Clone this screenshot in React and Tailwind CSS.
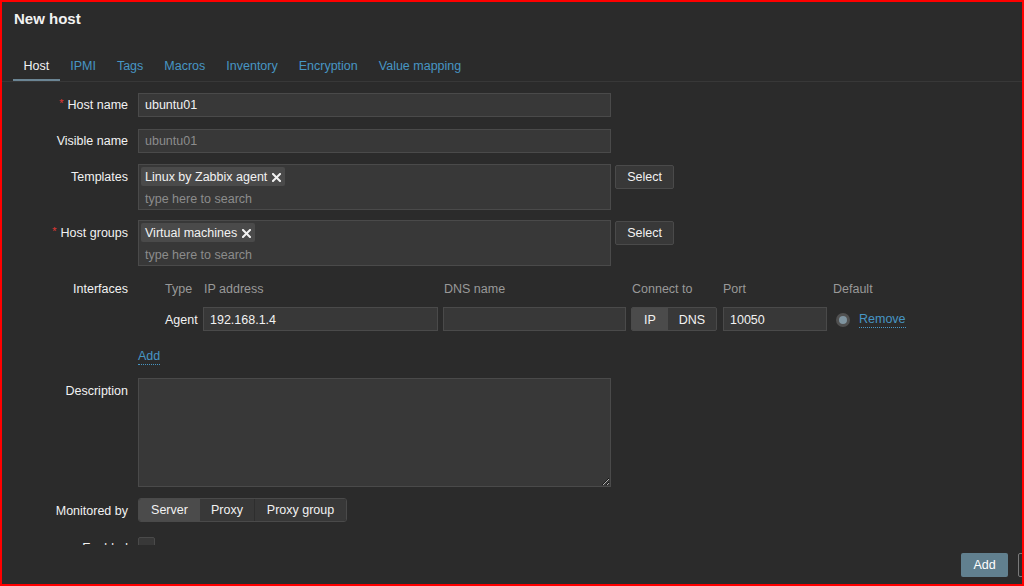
import React from "react";

const inputCls =
  "h-[24px] bg-[#383838] border border-[#4a4a4a] px-[6px] text-[#f2f2f2] outline-none leading-4";

function Req() {
  return <span className="text-[#e33734] text-[11px] mr-[4px] relative -top-[2px]">*</span>;
}

function Row({ label, required, tight, className = "", children }) {
  return (
    <div className={"flex gap-[10px] " + className}>
      <div className={"w-[126px] shrink-0 text-right leading-4 " + (tight ? "pt-[4px]" : "pt-[5px]")}>
        {required && <Req />}
        {label}
      </div>
      <div className="flex-1 min-w-0">{children}</div>
    </div>
  );
}

function XIcon() {
  return (
    <svg width="9" height="9" viewBox="0 0 9 9" className="ml-[5px]">
      <path d="M1 1 L8 8 M8 1 L1 8" stroke="#f2f2f2" strokeWidth="2" strokeLinecap="square" />
    </svg>
  );
}

function MultiSelect({ chip }) {
  return (
    <div className="flex">
      <div className="w-[473px] h-[46px] bg-[#383838] border border-[#4a4a4a] pt-[2px] pl-[2px]">
        <div className="inline-flex items-center h-[19px] px-[4px] pt-[1px] bg-[#4a4a4a] rounded-[2px] leading-[18px]">
          {chip}
          <XIcon />
        </div>
        <div className="mt-[4px] pl-[4px] leading-4 text-[#8c8c8c]">type here to search</div>
      </div>
      <button className="ml-[4px] mt-[1px] h-[24px] w-[59px] bg-[#383838] border border-[#4a4a4a] rounded-[2px] text-[#f2f2f2]">
        Select
      </button>
    </div>
  );
}

const tabs = ["Host", "IPMI", "Tags", "Macros", "Inventory", "Encryption", "Value mapping"];

export default function App() {
  return (
    <div className="w-[1024px] h-[586px] border-2 border-[#ff0000] bg-[#2b2b2b] flex flex-col overflow-hidden font-['Liberation_Sans',Arial,sans-serif] text-[12.5px] text-[#f2f2f2]">
      {/* header */}
      <div className="pl-[12px] pt-[9px] text-[15px] font-bold leading-4">New host</div>
      <div className="mt-[31px] flex pl-[11px] border-b border-[#383838]">
        {tabs.map((t, i) => (
          <div
            key={t}
            className={
              "px-[10.5px] pb-[5px] leading-4 border-b-2 " +
              (i === 0 ? "border-[#6b8594] text-[#f2f2f2]" : "border-transparent text-[#4796c4]")
            }
          >
            {t}
          </div>
        ))}
      </div>

      {/* form */}
      <div className="flex-1 overflow-hidden pt-[11px]">
        <Row label="Host name" required tight>
          <input className={inputCls + " w-[473px]"} defaultValue="ubuntu01" readOnly />
        </Row>
        <Row label="Visible name" tight className="mt-[12px]">
          <input className={inputCls + " w-[473px] placeholder-[#8c8c8c]"} placeholder="ubuntu01" readOnly />
        </Row>
        <Row label="Templates" className="mt-[11px]">
          <MultiSelect chip="Linux by Zabbix agent" />
        </Row>
        <Row label="Host groups" required className="mt-[10px]">
          <MultiSelect chip="Virtual machines" />
        </Row>
        <Row label="Interfaces" className="mt-[10px]">
          <div className="pl-[27px] pt-[5px] grid grid-cols-[38px_240px_188px_92px_110px_auto] gap-y-[10px] items-center leading-4">
            <div className="text-[#999999]">Type</div>
            <div className="text-[#999999] pl-[1px]">IP address</div>
            <div className="text-[#999999] pl-[1px]">DNS name</div>
            <div className="text-[#999999] pl-[1px]">Connect to</div>
            <div className="text-[#999999]">Port</div>
            <div className="text-[#999999]">Default</div>

            <div className="pt-[1px]">Agent</div>
            <input className={inputCls + " w-[235px] pt-[1px]"} defaultValue="192.168.1.4" readOnly />
            <input className={inputCls + " w-[183px]"} defaultValue="" readOnly />
            <div className="flex w-[86px] h-[24px] border border-[#4a4a4a] rounded-[2px] overflow-hidden pt-[1px] bg-[#383838]">
              <div className="w-[36px] -mt-[1px] pt-[1px] bg-[#4b4b4b] flex items-center justify-center">IP</div>
              <div className="flex-1 flex items-center justify-center">DNS</div>
            </div>
            <input className={inputCls + " w-[104px] pt-[1px]"} defaultValue="10050" readOnly />
            <div className="flex items-center pt-[2px]">
              <span className="ml-[3px] w-[14px] h-[14px] rounded-full bg-[#7f94a0] border-[3px] border-[#505050]" />
              <span className="ml-[9px] text-[#4796c4] border-b border-dotted border-[#4796c4] leading-[15px]">
                Remove
              </span>
            </div>
          </div>
          <div className="mt-[17px] leading-4">
            <span className="text-[#4796c4] border-b border-dotted border-[#4796c4] leading-[15px] inline-block">
              Add
            </span>
          </div>
        </Row>
        <Row label="Description" className="mt-[13px]">
          <textarea
            className="block w-[473px] h-[109px] bg-[#383838] border border-[#4a4a4a] outline-none px-[6px] py-[4px]"
            readOnly
          />
        </Row>
        <Row label="Monitored by" className="mt-[11px]">
          <div className="inline-flex h-[24px] border border-[#4a4a4a] rounded-[3px] overflow-hidden">
            <div className="w-[61px] pt-[1px] bg-[#4b4b4b] flex items-center justify-center">Server</div>
            <div className="w-[55px] pt-[1px] bg-[#383838] flex items-center justify-center border-r border-[#2e2e2e]">
              Proxy
            </div>
            <div className="w-[91px] pt-[1px] bg-[#383838] flex items-center justify-center">Proxy group</div>
          </div>
        </Row>
        <Row label="Enabled" className="mt-[13px]">
          <div className="mt-[2px] w-[17px] h-[17px] bg-[#383838] border border-[#4a4a4a] rounded-[2px]" />
        </Row>
      </div>

      {/* footer */}
      <div className="h-[39px] shrink-0 flex justify-end gap-[10px] pt-[8px]">
        <button className="h-[24px] w-[47px] pt-[1px] bg-[#61808f] rounded-[2px] text-white">Add</button>
        <button className="h-[24px] w-[60px] mr-[-56px] border border-[#7a7a7a] rounded-[2px] text-[#f2f2f2]">
          Cancel
        </button>
      </div>
    </div>
  );
}
